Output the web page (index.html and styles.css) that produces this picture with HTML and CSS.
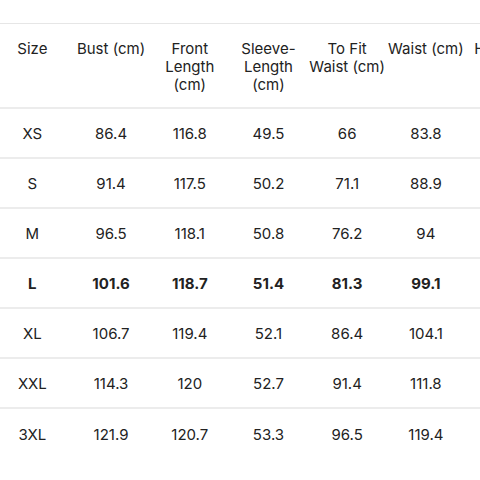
FILE: index.html
```html
<!DOCTYPE html>
<html>
<head>
<meta charset="utf-8">
<link rel="stylesheet" href="styles.css">
</head>
<body>
<div class="wrap">
<table class="chart">
<thead>
<tr><th>Size</th><th>Bust (cm)</th><th>Front<br>Length<br>(cm)</th><th>Sleeve-<br>Length<br>(cm)</th><th>To Fit<br>Waist (cm)</th><th>Waist (cm)</th><th>Hip (cm)</th></tr>
</thead>
<tbody>
<tr><td>XS</td><td>86.4</td><td>116.8</td><td>49.5</td><td>66</td><td>83.8</td><td>91.4</td></tr>
<tr><td>S</td><td>91.4</td><td>117.5</td><td>50.2</td><td>71.1</td><td>88.9</td><td>96.5</td></tr>
<tr><td>M</td><td>96.5</td><td>118.1</td><td>50.8</td><td>76.2</td><td>94</td><td>101.6</td></tr>
<tr class="sel"><td>L</td><td>101.6</td><td>118.7</td><td>51.4</td><td>81.3</td><td>99.1</td><td>106.7</td></tr>
<tr><td>XL</td><td>106.7</td><td>119.4</td><td>52.1</td><td>86.4</td><td>104.1</td><td>111.8</td></tr>
<tr><td>XXL</td><td>114.3</td><td>120</td><td>52.7</td><td>91.4</td><td>111.8</td><td>119.4</td></tr>
<tr><td>3XL</td><td>121.9</td><td>120.7</td><td>53.3</td><td>96.5</td><td>119.4</td><td>127</td></tr>
</tbody>
</table>
</div>
</body>
</html>
```
FILE: styles.css
```css
html, body { margin: 0; padding: 0; background: #fff; }
body { font-family: "Inter", "Liberation Sans", sans-serif; color: #222; }
.wrap { width: 480px; height: 480px; overflow: hidden; padding-top: 23px; box-sizing: border-box; }
.chart { border-collapse: collapse; table-layout: fixed; width: 551px; margin-left: -7px; border-top: 1px solid #e6e6e6; }
.chart th, .chart td { width: 78.7px; text-align: center; padding: 0; box-sizing: border-box; font-size: 15px; white-space: nowrap; }
.chart th { font-weight: 400; vertical-align: top; padding-top: 16px; height: 84px; line-height: 18px; border-bottom: 2px solid #ececec; }
.chart td { height: 50px; padding-top: 2px; border-bottom: 2px solid #ececec; }
.chart tbody tr:last-child td { border-bottom: none; }
.sel td { font-weight: 700; }
```
